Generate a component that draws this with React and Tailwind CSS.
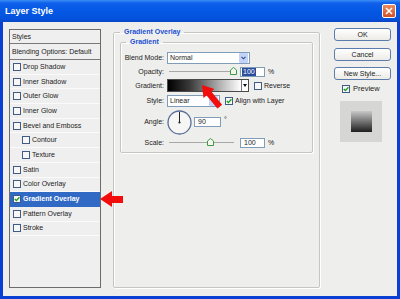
import React from 'react';

const Check = () => (
  <svg width="6" height="6" viewBox="0 0 6 6">
    <polyline points="0.8,3 2.4,4.6 5.4,1.2" fill="none" stroke="#1f9e1f" strokeWidth="1.4" />
  </svg>
);

const Box = ({ checked, className = '' }) => (
  <span className={`inline-flex h-[8px] w-[8px] shrink-0 items-center justify-center border border-[#3f5b88] bg-[#f7f7f7] ${className}`}>
    {checked && <Check />}
  </span>
);

const Thumb = () => (
  <svg width="7" height="8" viewBox="0 0 7 8">
    <path d="M0.5 3 L3.5 0.5 L6.5 3 L6.5 7.5 L0.5 7.5 Z" fill="#f4f4f0" stroke="#3e9b3e" strokeWidth="1" />
  </svg>
);

const Slider = ({ width, pos }) => (
  <div className={`relative h-[9px] ${width}`}>
    <div className="absolute left-[2px] right-0 top-[4px] h-[2px] border-t border-[#a8a8a8] border-b-white" />
    <div className="absolute top-0" style={{ left: pos }}>
      <Thumb />
    </div>
  </div>
);

const SelectArrow = () => (
  <span className="flex h-[10px] w-[9px] items-center justify-center rounded-[1px] bg-[#c3d3f8]">
    <svg width="5" height="4" viewBox="0 0 5 4">
      <polyline points="0.5,0.8 2.5,2.8 4.5,0.8" fill="none" stroke="#2d4b8e" strokeWidth="1.1" />
    </svg>
  </span>
);

const leftItems = [
  { name: 'Drop Shadow' },
  { name: 'Inner Shadow' },
  { name: 'Outer Glow' },
  { name: 'Inner Glow' },
  { name: 'Bevel and Emboss' },
  { name: 'Contour', indent: true },
  { name: 'Texture', indent: true },
  { name: 'Satin' },
  { name: 'Color Overlay' },
  { name: 'Gradient Overlay', checked: true, active: true },
  { name: 'Pattern Overlay' },
  { name: 'Stroke' },
];

const Label = ({ children }) => <span className="w-[43px] text-right">{children}</span>;

export default function App() {
  return (
    <div className="relative flex h-[299px] w-[400px] flex-col overflow-hidden bg-[#0b3fd4] font-['Liberation_Sans',Arial,sans-serif] text-[7px] leading-[8px] text-[#1b1b1b]">
      {/* Title bar */}
      <div className="flex h-[22px] shrink-0 items-center bg-[linear-gradient(180deg,#3c8ef7_0%,#0f60ea_14%,#0458e4_50%,#0452dc_85%,#0944c6_100%)] pl-[5px] pr-[4px]">
        <span className="flex-1 text-[9px] font-bold leading-[10px] text-white">Layer Style</span>
        <span className="flex h-[14px] w-[14px] items-center justify-center rounded-[2px] border border-white bg-[linear-gradient(180deg,#ea8a5c,#d2502a)]">
          <svg width="8" height="8" viewBox="0 0 8 8">
            <path d="M1 1 L7 7 M7 1 L1 7" stroke="#fff" strokeWidth="1.6" />
          </svg>
        </span>
      </div>

      {/* Body */}
      <div className="mx-[3px] mb-[3px] flex flex-1 items-start bg-[#eeeeec] pl-[6px]">
        {/* Styles list */}
        <div className="mt-[7px] flex h-[259px] w-[92px] flex-col border border-[#6c6c6c] bg-[#efefef]">
          <div className="flex h-[14px] items-center border-b border-[#7a7a7a] pl-[2px]">Styles</div>
          <div className="flex h-[16px] items-center border-b border-[#7a7a7a] pl-[2px]">Blending Options: Default</div>
          {leftItems.map((it) => (
            <div
              key={it.name}
              className={`flex h-[14.7px] items-center gap-[2px] border-b ${
                it.active ? 'border-[#316ac5] bg-[#316ac5] font-bold text-white' : 'border-[#fafafa]'
              } ${it.indent ? 'pl-[12px]' : 'pl-[3px]'}`}
            >
              <Box checked={it.checked} />
              <span>{it.name}</span>
            </div>
          ))}
        </div>

        {/* Gradient Overlay group */}
        <fieldset className="ml-[12px] mt-[6px] h-[260px] w-[206px] rounded-[2px] border border-[#c6c6c1] px-[6px] shadow-[inset_1px_1px_0_#fff,1px_1px_0_#fff]">
          <legend className="px-[4px] font-bold leading-[8px] text-[#1c4fd2]">Gradient Overlay</legend>
          <fieldset className="mt-[2px] h-[115px] w-[193px] rounded-[2px] border border-[#c6c6c1] shadow-[inset_1px_1px_0_#fff,1px_1px_0_#fff]">
            <legend className="ml-[5px] px-[4px] font-bold leading-[8px] text-[#1c4fd2]">Gradient</legend>
            <div className="flex flex-col pt-[4px]">
              <div className="flex h-[15px] items-center">
                <Label>Blend Mode:</Label>
                <div className="ml-[3px] flex h-[12px] w-[83px] items-center justify-between border border-[#7f9db9] bg-white pl-[2px] pr-[1px]">
                  <span>Normal</span>
                  <SelectArrow />
                </div>
              </div>
              <div className="flex h-[13px] items-center">
                <Label>Opacity:</Label>
                <div className="ml-[3px]">
                  <Slider width="w-[69px]" pos={63} />
                </div>
                <div className="ml-[4px] flex h-[10px] w-[25px] items-center border border-[#7f9db9] bg-white pl-[1px]">
                  <span className="bg-[#2a4c9a] px-[1px] text-white">100</span>
                </div>
                <span className="ml-[3px]">%</span>
              </div>
              <div className="flex h-[15px] items-center">
                <Label>Gradient:</Label>
                <div className="ml-[3px] flex h-[13px] w-[82px] border border-[#4a4a4a]">
                  <div className="flex-1 bg-[linear-gradient(90deg,#000_0%,#3a3a3a_30%,#bdbdbd_75%,#fff_100%)]" />
                  <div className="flex w-[7px] items-center justify-center border-l border-[#777] bg-white">
                    <svg width="4" height="3" viewBox="0 0 4 3">
                      <path d="M0 0 L4 0 L2 3 Z" fill="#111" />
                    </svg>
                  </div>
                </div>
                <Box className="ml-[5px]" />
                <span className="ml-[2px]">Reverse</span>
              </div>
              <div className="flex h-[15px] items-center">
                <Label>Style:</Label>
                <div className="ml-[3px] flex h-[12px] w-[53px] items-center justify-between border border-[#7f9db9] bg-white pl-[2px] pr-[1px]">
                  <span>Linear</span>
                  <SelectArrow />
                </div>
                <Box checked className="ml-[5px]" />
                <span className="ml-[2px]">Align with Layer</span>
              </div>
              <div className="flex h-[28px] items-center">
                <Label>Angle:</Label>
                <svg className="ml-[3px]" width="25" height="25" viewBox="0 0 25 25">
                  <circle cx="12.5" cy="12.5" r="11.5" fill="#f6f6f4" stroke="#5a6c98" strokeWidth="1.3" />
                  <line x1="12.5" y1="12.5" x2="12.5" y2="2" stroke="#222" strokeWidth="1" />
                  <circle cx="12.5" cy="12.5" r="1.1" fill="#222" />
                </svg>
                <div className="ml-[2px] flex h-[10px] w-[27px] items-center border border-[#7f9db9] bg-white pl-[3px]">90</div>
                <span className="ml-[3px] self-start pt-[8px]">°</span>
              </div>
              <div className="flex h-[13px] items-center">
                <Label>Scale:</Label>
                <div className="ml-[3px]">
                  <Slider width="w-[67px]" pos={40} />
                </div>
                <div className="ml-[6px] flex h-[10px] w-[25px] items-center border border-[#7f9db9] bg-white pl-[3px]">100</div>
                <span className="ml-[3px]">%</span>
              </div>
            </div>
          </fieldset>
        </fieldset>

        {/* Buttons */}
        <div className="ml-[14px] flex w-[57px] flex-col">
          <button className="mt-[6px] h-[13px] rounded-[3px] border border-[#5b7cad] bg-[linear-gradient(180deg,#ffffff,#ecebe6)] text-[7px] leading-[8px]">OK</button>
          <button className="mt-[7px] h-[13px] rounded-[3px] border border-[#5b7cad] bg-[linear-gradient(180deg,#ffffff,#ecebe6)] text-[7px] leading-[8px]">Cancel</button>
          <button className="mt-[6px] h-[13px] rounded-[3px] border border-[#5b7cad] bg-[linear-gradient(180deg,#ffffff,#ecebe6)] text-[7px] leading-[8px]">New Style...</button>
          <div className="mt-[4px] flex h-[9px] items-center pl-[8px]">
            <Box checked />
            <span className="ml-[3px] text-[7.5px]">Preview</span>
          </div>
          <div className="ml-[6px] mt-[8px] flex h-[41px] w-[42px] items-center justify-center bg-[#d6d6d4]">
            <div className="h-[21px] w-[21px] bg-[linear-gradient(180deg,#c8c8c8,#1e1e1e)]" />
          </div>
        </div>
      </div>

      {/* Red arrows */}
      <svg className="absolute left-[198px] top-[82px]" width="26" height="28" viewBox="0 0 26 28">
        <polygon points="4,3 16.4,7.1 13.3,9.6 24.1,22.8 19.4,26.6 8.6,13.4 5.5,16" fill="#f20c0c" />
      </svg>
      <svg className="absolute left-[100px] top-[191px]" width="23" height="17" viewBox="0 0 23 17">
        <polygon points="0,8 12,0 12,5 23,5 23,12 12,12 12,16" fill="#f20c0c" />
      </svg>
    </div>
  );
}
